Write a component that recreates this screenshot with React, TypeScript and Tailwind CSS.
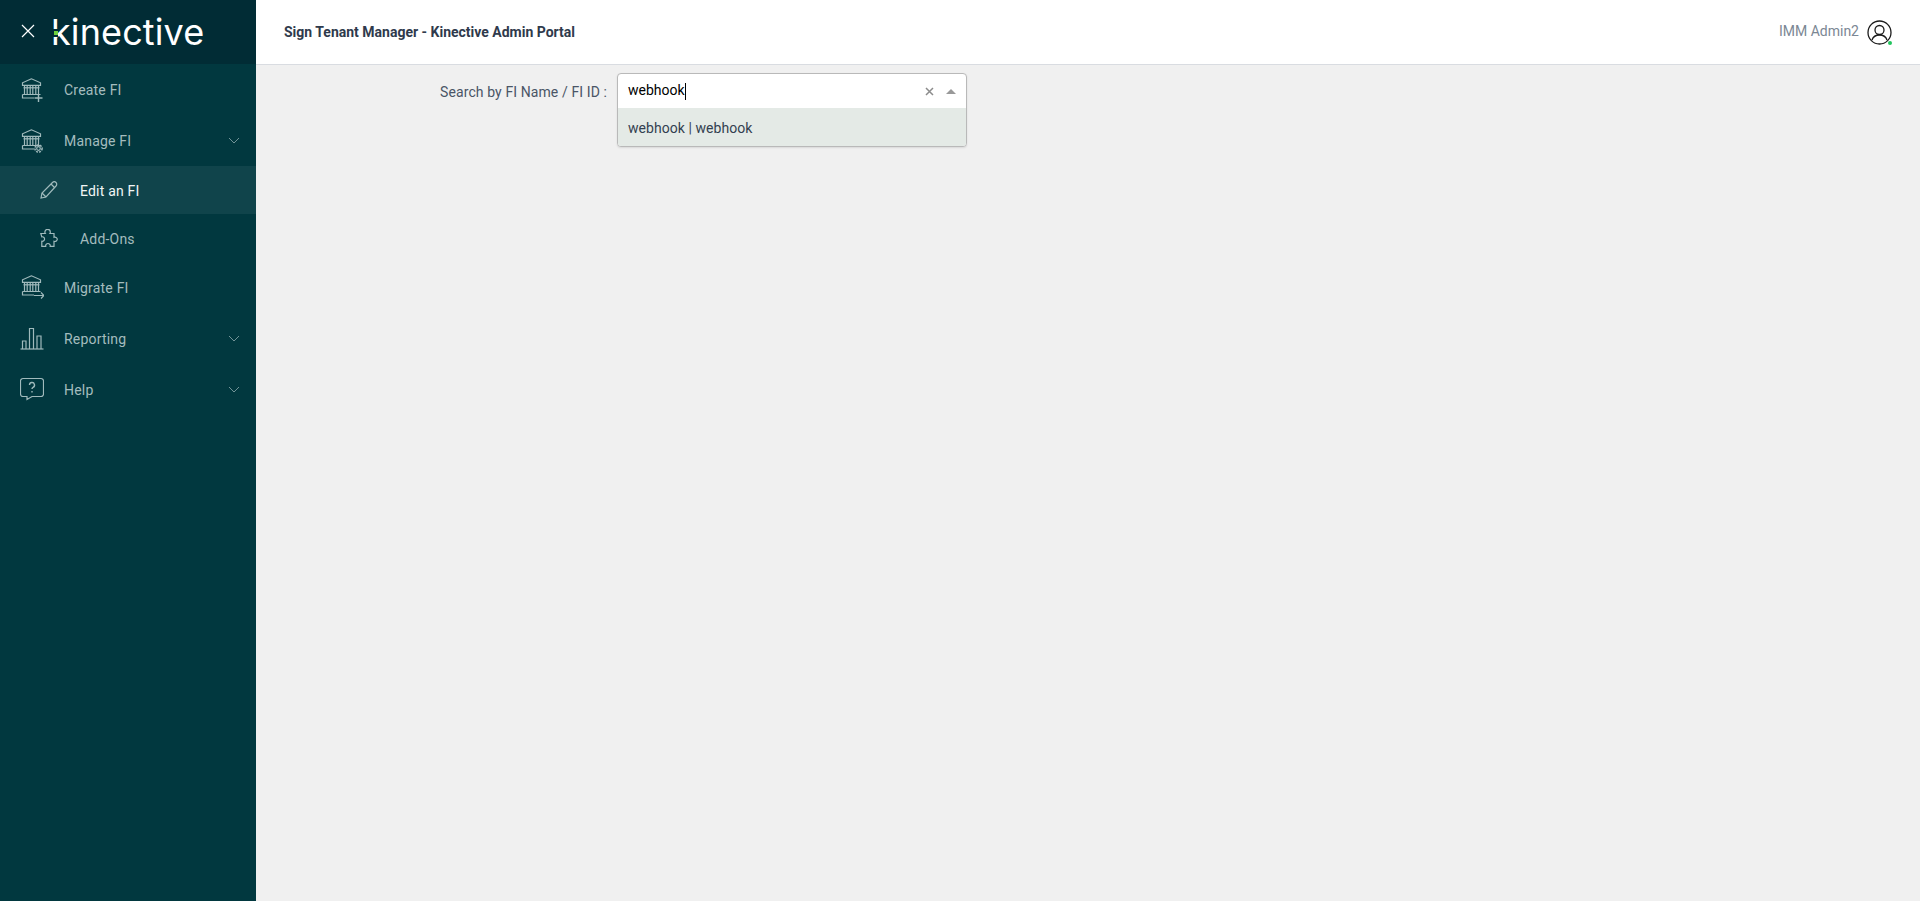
import { FC, ReactNode } from "react";

const Bank: FC<{ children?: ReactNode }> = ({ children }) => (
    <svg width="24" height="24" viewBox="0 0 24 24" fill="none" stroke="#a0babc" strokeWidth="1.200" className="shrink-0">
        <path d="M11.500 .8 2.500 4.800V7.300h18V4.800z" />
        <path d="M4.500 7.300v9M7.200 7.300v9M10.200 7.300v9M12.800 7.300v9M15.800 7.300v9M18.500 7.300v9" />
        <path d="M3.500 9.800h16" />
        <path d="M2.500 16.500h18M2.500 16.500v3.500h11.500" />
        {children}
    </svg>
);

const PlusBank = () => (
    <Bank>
        <path d="M18.500 16v8M14.500 20h8" strokeWidth="1.400" />
    </Bank>
);

const GearBank = () => (
    <Bank>
        <circle cx="18.500" cy="19.500" r="1.800" />
        <circle cx="18.500" cy="19.500" r="3.600" strokeDasharray="2 1" strokeWidth="1.500" />
    </Bank>
);

const ArrowBank = () => (
    <Bank>
        <path d="M14 20.500h10M21 17.500l3 3-3 3" />
    </Bank>
);

const Pencil = () => (
    <svg width="18" height="18" viewBox="0 0 18 18" fill="none" stroke="#a0babc" strokeWidth="1.200" className="shrink-0">
        <path d="M1 17 2 12 12.500 1.500a2 2 0 0 1 3.500 3.500L6 16z" />
        <path d="M11 3 14.500 6.500M2 12 6 16" />
    </svg>
);

const Puzzle = () => (
    <svg width="18" height="18" viewBox="0 0 18 18" fill="none" stroke="#a0babc" strokeWidth="1.200" className="shrink-0">
        <path d="M.8 4.500h4.500a2 2 0 0 1-.4-1.500 2.700 2.700 0 0 1 5.400 0 2 2 0 0 1-.4 1.500H14v3.800a2.400 2.400 0 0 1 3.300 2 2.400 2.400 0 0 1-3.300 2v5H10.200a2.300 2.300 0 1 0-4.500 0H1.800v-5a2.300 2.300 0 1 0 0-4.500z" />
    </svg>
);

const Bars = () => (
    <svg width="24" height="24" viewBox="0 0 24 24" fill="none" stroke="#a0babc" strokeWidth="1.200" className="shrink-0">
        <path d="M0.500 23h23" />
        <path d="M2.500 23v-8h3.500v8M9.500 23V2.500h4V23M17 23V10h4v13" />
    </svg>
);

const Question = () => (
    <svg width="24" height="24" viewBox="0 0 24 24" fill="none" stroke="#a0babc" strokeWidth="1.200" className="shrink-0">
        <path d="M3 1.500h18a2.500 2.500 0 0 1 2.500 2.500v13a2.500 2.500 0 0 1-2.500 2.500H12l-5 3v-3H3A2.500 2.500 0 0 1 .5 17V4A2.500 2.500 0 0 1 3 1.500z" />
        <path d="M9.500 8a2.500 2.500 0 1 1 3.500 2.300c-.8.400-1 1-1 1.800" strokeWidth="1.400" />
        <path d="M12 14v1.500" strokeWidth="1.400" />
    </svg>
);

const Chevron = () => (
    <svg width="12" height="7" viewBox="0 0 12 7" fill="none" stroke="#7f9ea2" strokeWidth="0.900" className="mr-[16px] ml-auto shrink-0">
        <path d="M1 1l5 5 5-5" />
    </svg>
);

const NavRow: FC<{ icon: ReactNode; label: string; chevron?: boolean; height: string }> = ({ icon, label, chevron, height }) => (
    <div className={`flex items-center pl-[20px] ${height}`}>
        <span className="flex w-[44px] shrink-0">{icon}</span>
        <span className="pt-[2px] text-[14px] tracking-[0.2px] text-[#a4bcbe]">{label}</span>
        {chevron && <Chevron />}
    </div>
);

const SubRow: FC<{ icon: ReactNode; label: string; active?: boolean }> = ({ icon, label, active }) => (
    <div className={`flex h-[48px] items-center pl-[40px] ${active ? "bg-[#10444b]" : ""}`}>
        <span className="flex w-[40px] shrink-0">{icon}</span>
        <span className={`pt-[2px] text-[14px] tracking-[0.2px] ${active ? "text-[#f1f6f6]" : "text-[#a4bcbe]"}`}>{label}</span>
    </div>
);

export default function App() {
    return (
        <div className="flex h-[901px] w-full overflow-hidden bg-[#f0f0f0] font-['Roboto',sans-serif] text-[14px]">
            <aside className="flex w-[256px] shrink-0 flex-col bg-[#01383f]">
                <div className="flex h-[64px] items-center bg-[#012c35] pl-[21px]">
                    <svg width="14" height="14" viewBox="0 0 14 14" stroke="#ffffff" strokeWidth="1.200" className="mb-[2px] shrink-0">
                        <path d="M1 1l12 12M13 1 1 13" />
                    </svg>
                    <div className="relative ml-[16px] font-['Inter',sans-serif] text-[36px] leading-none font-normal tracking-[0.1px] text-white">
                        kinective
                        <span className="absolute top-[15px] left-0 flex h-[8px] w-[7px] items-center bg-[#012c35] pl-[3px]">
                            <span className="h-[4px] w-[4px] bg-[#6fd13f]" />
                        </span>
                    </div>
                </div>
                <NavRow icon={<PlusBank />} label="Create FI" height="h-[51px]" />
                <NavRow icon={<GearBank />} label="Manage FI" chevron height="h-[51px]" />
                <SubRow icon={<Pencil />} label="Edit an FI" active />
                <SubRow icon={<Puzzle />} label="Add-Ons" />
                <NavRow icon={<ArrowBank />} label="Migrate FI" height="h-[50px]" />
                <NavRow icon={<Bars />} label="Reporting" chevron height="h-[52px]" />
                <NavRow icon={<Question />} label="Help" chevron height="h-[50px]" />
            </aside>
            <div className="flex min-w-0 flex-1 flex-col">
                <header className="flex h-[65px] shrink-0 items-center justify-between border-b border-[#d9dce1] bg-white pr-[28px] pl-[28px]">
                    <h1 className="text-[14px] font-bold text-[#2f3a4c]">Sign Tenant Manager - Kinective Admin Portal</h1>
                    <div className="flex items-center gap-[8px]">
                        <span className="pb-[2px] text-[14px] text-[#7b8794]">IMM Admin2</span>
                        <div className="relative">
                            <svg width="25" height="25" viewBox="0 0 25 25" fill="none" stroke="#1c1c1c" strokeWidth="1.300">
                                <circle cx="12.500" cy="12.500" r="11.500" />
                                <circle cx="12.500" cy="10" r="4.500" />
                                <path d="M5 20c1.200-3.500 4-5 7.500-5s6.300 1.500 7.500 5" />
                            </svg>
                            <span className="absolute right-0 bottom-0 h-[4px] w-[4px] rounded-full bg-[#22c55e]" />
                        </div>
                    </div>
                </header>
                <main className="flex items-start pt-[8px] pl-[174px]">
                    <label className="mt-[9px] w-[177px] text-right text-[14px] tracking-[0.1px] text-[#4a5566]">Search by FI Name / FI ID :</label>
                    <div className="ml-[10px] w-[350px] overflow-hidden rounded-[4px] border border-[#b9b9b9] bg-white shadow-[0_1px_2px_rgba(0,0,0,0.1)]">
                        <div className="flex h-[34px] items-center pr-[10px] pl-[10px]">
                            <span className="pb-[2px] text-[14px] text-black">webhook</span>
                            <span className="h-[17px] w-px bg-black" />
                            <svg width="9" height="9" viewBox="0 0 9 9" stroke="#8c8c8c" strokeWidth="1.500" className="mr-[12px] ml-auto">
                                <path d="M1 1l7 7M8 1 1 8" />
                            </svg>
                            <span className="h-0 w-0 border-x-[5px] border-b-[5px] border-x-transparent border-b-[#999999]" />
                        </div>
                        <div className="flex h-[38px] items-center bg-[#e4eae6] pt-[2px] pl-[10px] text-[14px] tracking-[0.05px] text-[#333f50]">webhook | webhook</div>
                    </div>
                </main>
            </div>
        </div>
    );
}
